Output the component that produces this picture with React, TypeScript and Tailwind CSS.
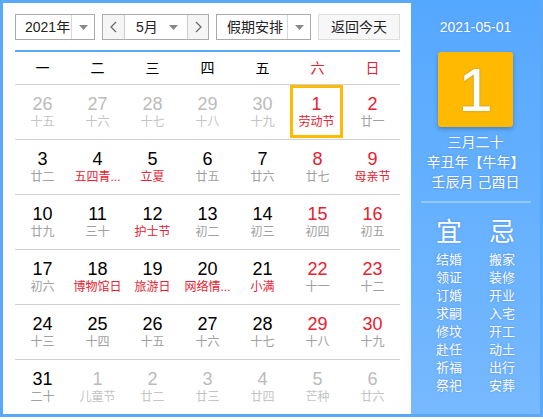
import React from 'react';

type Day = { n: number; l: string; other?: boolean; red?: boolean; fest?: boolean; sel?: boolean };

const rows: Day[][] = [
  [
    { n: 26, l: '十五', other: true },
    { n: 27, l: '十六', other: true },
    { n: 28, l: '十七', other: true },
    { n: 29, l: '十八', other: true },
    { n: 30, l: '十九', other: true },
    { n: 1, l: '劳动节', red: true, fest: true, sel: true },
    { n: 2, l: '廿一', red: true },
  ],
  [
    { n: 3, l: '廿二' },
    { n: 4, l: '五四青...', fest: true },
    { n: 5, l: '立夏', fest: true },
    { n: 6, l: '廿五' },
    { n: 7, l: '廿六' },
    { n: 8, l: '廿七', red: true },
    { n: 9, l: '母亲节', red: true, fest: true },
  ],
  [
    { n: 10, l: '廿九' },
    { n: 11, l: '三十' },
    { n: 12, l: '护士节', fest: true },
    { n: 13, l: '初二' },
    { n: 14, l: '初三' },
    { n: 15, l: '初四', red: true },
    { n: 16, l: '初五', red: true },
  ],
  [
    { n: 17, l: '初六' },
    { n: 18, l: '博物馆日', fest: true },
    { n: 19, l: '旅游日', fest: true },
    { n: 20, l: '网络情...', fest: true },
    { n: 21, l: '小满', fest: true },
    { n: 22, l: '十一', red: true },
    { n: 23, l: '十二', red: true },
  ],
  [
    { n: 24, l: '十三' },
    { n: 25, l: '十四' },
    { n: 26, l: '十五' },
    { n: 27, l: '十六' },
    { n: 28, l: '十七' },
    { n: 29, l: '十八', red: true },
    { n: 30, l: '十九', red: true },
  ],
  [
    { n: 31, l: '二十' },
    { n: 1, l: '儿童节', other: true },
    { n: 2, l: '廿二', other: true },
    { n: 3, l: '廿三', other: true },
    { n: 4, l: '廿四', other: true },
    { n: 5, l: '芒种', other: true },
    { n: 6, l: '廿六', other: true },
  ],
];

const yi = ['结婚', '领证', '订婚', '求嗣', '修坟', '赴任', '祈福', '祭祀'];
const ji = ['搬家', '装修', '开业', '入宅', '开工', '动土', '出行', '安葬'];

const Caret = () => (
  <svg width="9" height="5" viewBox="0 0 9 5">
    <path d="M0 0 L9 0 L4.5 5 Z" fill="#888" />
  </svg>
);

const Chevron = ({ dir }: { dir: 'l' | 'r' }) => (
  <svg width="7" height="12" viewBox="0 0 7 12">
    <path d={dir === 'l' ? 'M6 1 L1 6 L6 11' : 'M1 1 L6 6 L1 11'} fill="none" stroke="#666" strokeWidth="1.2" />
  </svg>
);

const DayCell = ({ d }: { d: Day }) => {
  const numColor = d.other ? 'text-[#bbbbbb]' : d.red ? 'text-[#e8202f]' : 'text-black';
  const lunColor = d.other ? 'text-[#c4c4c4]' : d.fest ? 'text-[#e8202f]' : 'text-[#a0a0a0]';
  return (
    <div className="w-[55px] h-[54px]">
      <div
        className={`flex flex-col items-center justify-center ${d.sel ? 'w-[53px] h-[53px] border-[3px] border-[#ffbb00]' : 'w-[55px] h-[54px]'}`}
      >
        <div className={`text-[18px] leading-[20px] ${numColor}`}>{d.n}</div>
        <div className={`text-[12px] leading-[16px] whitespace-nowrap ${lunColor}`}>{d.l}</div>
      </div>
    </div>
  );
};

const App = () => {
  return (
    <div
      className="w-[543px] h-[417px] border-[3px] border-[#5aa8f8] flex bg-white"
      style={{ fontFamily: '"Liberation Sans", "Noto Sans CJK SC", sans-serif' }}
    >
      <div className="w-[408px] pl-[12px] pr-[11px] pt-[11px] flex flex-col">
        <div className="flex h-[26px] text-[14px] text-[#222] whitespace-nowrap">
          <div className="w-[80px] flex border border-[#aaaaaa]">
            <div className="w-[55px] flex items-center pl-[9px]">2021年</div>
            <div className="flex-1 flex items-center justify-center border-l border-[#d8d8d8]">
              <Caret />
            </div>
          </div>
          <div className="ml-[7px] w-[107px] flex border border-[#aaaaaa]">
            <div className="w-[22px] flex items-center justify-center bg-[#f5f5f5] border-r border-[#cccccc]">
              <Chevron dir="l" />
            </div>
            <div className="w-[62px] flex items-center justify-between pl-[11px] pr-[9px]">
              <span>5月</span>
              <Caret />
            </div>
            <div className="flex-1 flex items-center justify-center bg-[#f5f5f5] border-l border-[#cccccc]">
              <Chevron dir="r" />
            </div>
          </div>
          <div className="ml-[7px] w-[95px] flex border border-[#aaaaaa]">
            <div className="w-[70px] flex items-center pl-[10px]">假期安排</div>
            <div className="flex-1 flex items-center justify-center border-l border-[#d8d8d8]">
              <Caret />
            </div>
          </div>
          <div className="ml-[7px] w-[82px] flex items-center justify-center border border-[#dddddd] bg-[#f7f7f7]">
            返回今天
          </div>
        </div>
        <div className="mt-[10px] h-[2px] bg-[#5aa8f8]" />
        <div className="h-[32px] grid grid-cols-7 items-center text-[14px]">
          {['一', '二', '三', '四', '五', '六', '日'].map((w, i) => (
            <div key={w} className={`text-center ${i > 4 ? 'text-[#e8202f]' : 'text-black'}`}>
              {w}
            </div>
          ))}
        </div>
        {rows.map((r, i) => (
          <div key={i} className="flex border-t border-[#d0d0d0]">
            {r.map((d, j) => (
              <DayCell key={j} d={d} />
            ))}
          </div>
        ))}
      </div>
      <div className="flex-1 -mt-[3px] bg-gradient-to-b from-[#55a8ff] to-[#76b9ff] flex flex-col items-center text-white [text-shadow:0_0_2px_rgba(60,100,200,0.5)]">
        <div className="mt-[19px] text-[14px] leading-[16px]">2021-05-01</div>
        <div className="mt-[17px] w-[75px] h-[75px] rounded-[3px] bg-[#ffb900] shadow-[0_2px_4px_rgba(0,0,0,0.25)] flex items-center justify-center text-[62px] leading-none">
          1
        </div>
        <div className="mt-[5px] text-[14px] leading-[20px] flex flex-col items-center">
          <div>三月二十</div>
          <div>辛丑年【牛年】</div>
          <div>壬辰月 己酉日</div>
        </div>
        <div className="mt-[9px] w-[110px] h-[2px] bg-[#93c8ff]" />
        <div className="mt-[14px] flex gap-[27px]">
          {[{ h: '宜', items: yi }, { h: '忌', items: ji }].map((c) => (
            <div key={c.h} className="flex flex-col items-center">
              <div className="text-[26px] leading-[30px]">{c.h}</div>
              <div className="mt-[4px] flex flex-col items-center text-[13px] leading-[18px]">
                {c.items.map((t) => (
                  <div key={t}>{t}</div>
                ))}
              </div>
            </div>
          ))}
        </div>
      </div>
    </div>
  );
};

export default App;
